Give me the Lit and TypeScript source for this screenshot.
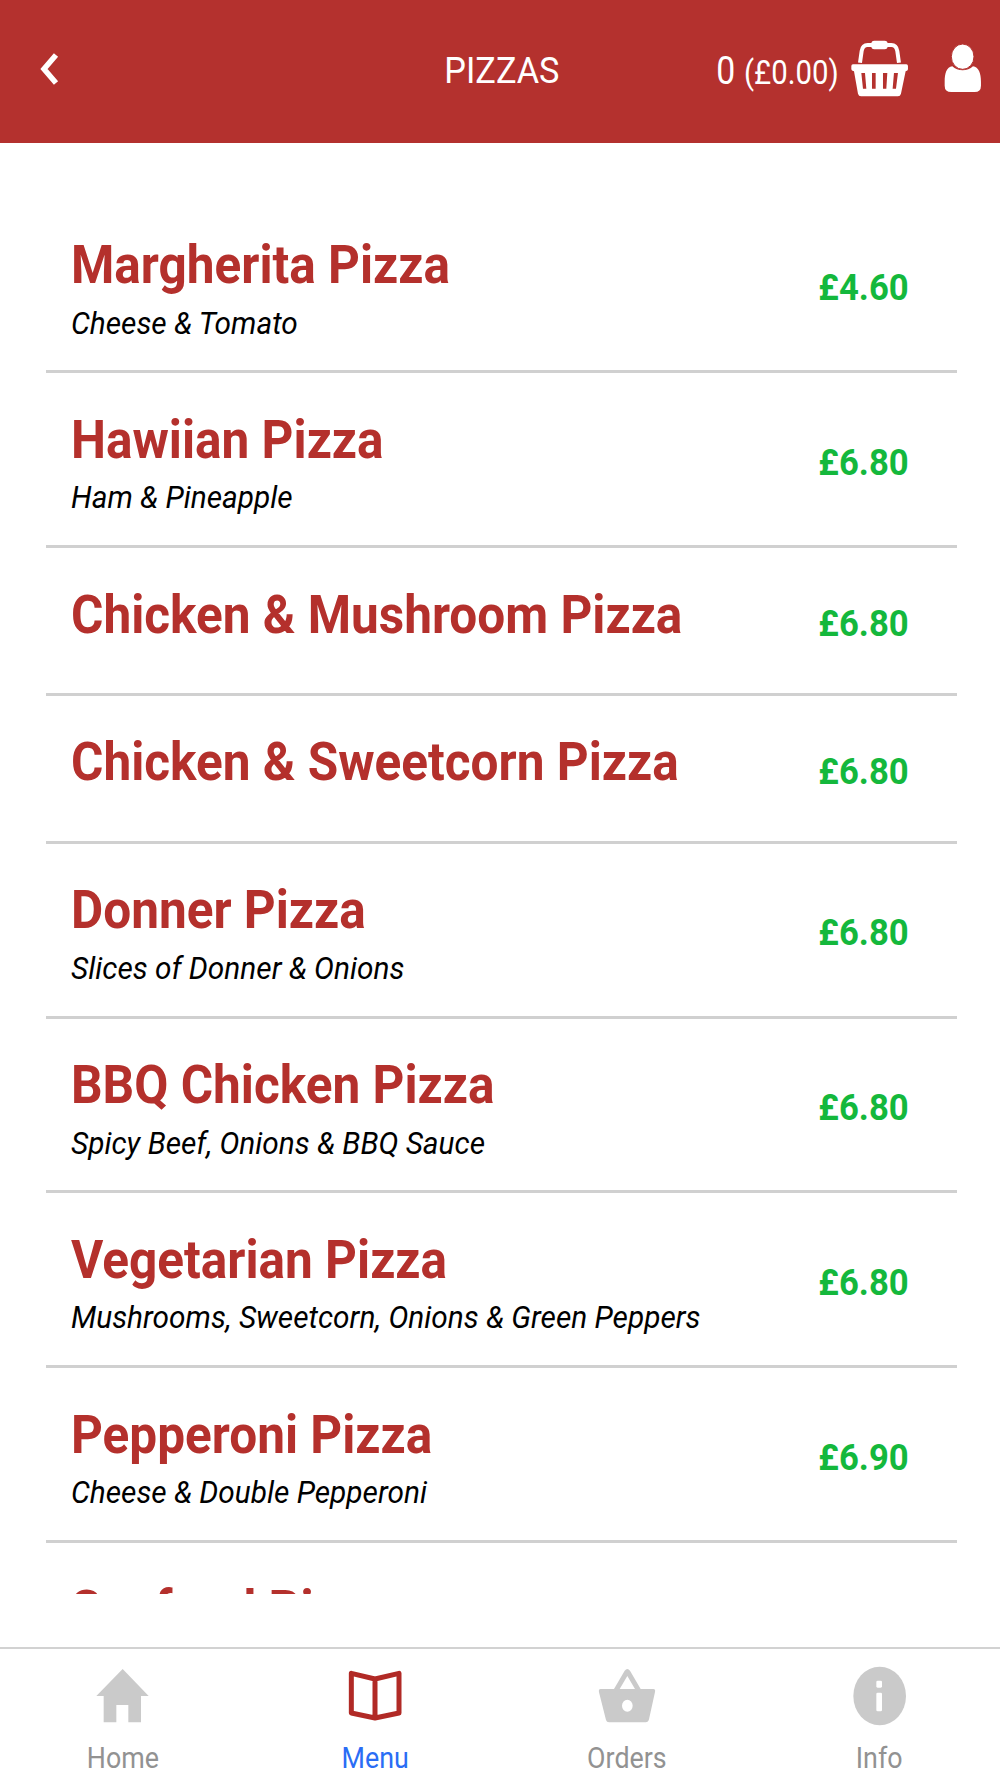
import { LitElement, html, css, svg, nothing } from "lit";
import { customElement, property } from "lit/decorators.js";

interface MenuItem {
  name: string;
  detail?: string;
  price: string;
}

const ITEMS: MenuItem[] = [
  { name: "Margherita Pizza", detail: "Cheese & Tomato", price: "£4.60" },
  { name: "Hawiian Pizza", detail: "Ham & Pineapple", price: "£6.80" },
  { name: "Chicken & Mushroom Pizza", price: "£6.80" },
  { name: "Chicken & Sweetcorn Pizza", price: "£6.80" },
  { name: "Donner Pizza", detail: "Slices of Donner & Onions", price: "£6.80" },
  { name: "BBQ Chicken Pizza", detail: "Spicy Beef, Onions & BBQ Sauce", price: "£6.80" },
  { name: "Vegetarian Pizza", detail: "Mushrooms, Sweetcorn, Onions & Green Peppers", price: "£6.80" },
  { name: "Pepperoni Pizza", detail: "Cheese & Double Pepperoni", price: "£6.90" },
  { name: "Seafood Pizza", price: "" },
];

const TABS = [
  {
    label: "Home",
    box: "96 75 180 186",
    icon: svg`<path fill="#cacaca" d="M188 87L266 168H243V247H205V195H169V247H131V168H109Z"/>`,
  },
  {
    label: "Menu",
    active: true,
    box: "852 75 180 186",
    icon: svg`<path fill="none" stroke="#b12a26" stroke-width="15" stroke-linejoin="round" d="M874 100L945 117L1017 100V219L945 234L874 219ZM945 117V234"/>`,
  },
  {
    label: "Orders",
    box: "108 75 180 186",
    icon: svg`<path fill="#cacaca" fill-rule="evenodd" d="M162 147L194 92Q202 82 210 92L242 147H280Q287 147 285 156L267 238Q265 247 257 247H147Q140 247 138 240L117 157Q115 147 122 147ZM179 147H225L202 108ZM202 179A16 18 0 1 0 202 215A16 18 0 1 0 202 179Z"/>`,
  },
  {
    label: "Info",
    box: "864 75 180 186",
    icon: svg`<ellipse cx="959" cy="168" rx="79" ry="88" fill="#cacaca"/><rect x="949" y="122" width="17" height="21" rx="4" fill="#fff"/><rect x="949" y="158" width="17" height="56" rx="4" fill="#fff"/>`,
  },
];

@customElement("menu-row")
class MenuRow extends LitElement {
  @property({ attribute: false }) item!: MenuItem;

  static styles = css`
    :host {
      display: block;
      flex: none;
    }
    .row {
      box-sizing: border-box;
      height: 147.7px;
      border-bottom: 3px solid #d0d0d0;
      padding: 0 48.5px 0 24.5px;
      display: flex;
      justify-content: space-between;
      align-items: center;
    }
    .row.tall {
      height: 174.9px;
    }
    .text {
      align-self: flex-start;
      padding-top: 34.5px;
      white-space: nowrap;
    }
    .name {
      font-size: 54.3px;
      line-height: 64px;
      font-weight: 700;
      color: #b4302c;
      transform: scaleX(0.912);
      transform-origin: left;
    }
    .detail {
      margin-top: 6.5px;
      font-size: 32px;
      line-height: 38px;
      font-style: italic;
      color: #000;
      transform: scaleX(0.932);
      transform-origin: left;
    }
    .price {
      font-size: 37.5px;
      line-height: 44px;
      padding-top: 4.5px;
      font-weight: 700;
      color: #14b83c;
      transform: scaleX(0.925);
      transform-origin: right;
    }
  `;

  render() {
    const { name, detail, price } = this.item;
    return html`<div class="row ${detail ? "tall" : ""}">
      <div class="text">
        <div class="name">${name}</div>
        ${detail ? html`<div class="detail">${detail}</div>` : nothing}
      </div>
      <div class="price">${price}</div>
    </div>`;
  }
}

@customElement("app-root")
class AppRoot extends LitElement {
  static styles = css`
    :host {
      display: flex;
      flex-direction: column;
      width: 1000px;
      height: 1778px;
      overflow: hidden;
      background: #fff;
      font-family: Roboto, "Liberation Sans", sans-serif;
    }
    svg {
      display: block;
      flex: none;
    }
    .bar {
      flex: none;
      box-sizing: border-box;
      height: 143px;
      background: #b4312e;
      color: #fff;
      display: grid;
      grid-template-columns: 1fr auto 1fr;
      align-items: center;
      padding: 0 0 6px 3px;
    }
    .back {
      margin-left: 36px;
    }
    .heading {
      font-size: 37.5px;
      line-height: 44px;
      padding-top: 3px;
      transform: scaleX(0.915);
    }
    .cart {
      display: flex;
      align-items: center;
      justify-content: flex-end;
      margin-right: 19px;
    }
    .summary {
      display: flex;
      align-items: baseline;
      gap: 10px;
      padding-top: 4px;
      margin-right: 12px;
      transform: scaleX(0.89);
      transform-origin: right;
    }
    .count {
      font-size: 38px;
      line-height: 44px;
    }
    .total {
      font-size: 33px;
    }
    .user {
      margin-left: 35.5px;
    }
    .list {
      flex: none;
      box-sizing: border-box;
      height: 1450.5px;
      padding: 55.5px 43px 0 46px;
      overflow: hidden;
      display: flex;
      flex-direction: column;
    }
    .tabs {
      margin-top: auto;
      flex: none;
      box-sizing: border-box;
      height: 131px;
      border-top: 2px solid #d2d2d2;
      display: flex;
      justify-content: center;
    }
    .tab {
      flex: none;
      width: 252px;
      display: flex;
      flex-direction: column;
      align-items: center;
      padding-top: 16px;
      color: #929292;
    }
    .tab.active {
      color: #2a6df5;
    }
    .label {
      margin-top: 14px;
      padding-left: 3px;
      font-size: 29px;
      line-height: 34px;
      transform: scaleX(0.925);
    }
  `;

  render() {
    return html`
      <header class="bar">
        <svg class="back" width="21" height="36" viewBox="0 0 21 36">
          <path d="M17 4L5 18L17 32" fill="none" stroke="#fff" stroke-width="5.5" />
        </svg>
        <div class="heading">PIZZAS</div>
        <div class="cart">
          <div class="summary"><span class="count">0</span><span class="total">(£0.00)</span></div>
          <svg width="57.3" height="57" viewBox="454 59 172 171">
            <path d="M481 127L486 92Q489 74 504 74H575Q590 74 593 92L598 127" fill="none" stroke="#fff" stroke-width="12" />
            <rect x="515" y="61" width="49" height="26" rx="9" fill="#fff" />
            <path
              fill="#fff"
              fill-rule="evenodd"
              d="M460 132H620Q625 132 625 137V147Q625 152 618 153L604 220Q602 228 595 228H484Q477 228 475 220L463 153Q455 152 455 147V137Q455 132 460 132ZM485 158L490 205H500L496 158ZM517 158V205H528V158ZM550 158V205H560L563 158ZM583 158L579 205H589L595 158Z"
            />
          </svg>
          <svg class="user" width="37.3" height="48.7" viewBox="732 71 112 146">
            <path
              fill="#fff"
              d="M757 138C773 154 803 154 819 138C836 140 843 159 843 184V196Q843 215 824 215H754Q734 215 734 196V184C734 159 740 140 757 138Z"
            />
            <ellipse cx="788" cy="109" rx="34" ry="38" fill="#fff" stroke="#b4312e" stroke-width="3" />
          </svg>
        </div>
      </header>
      <main class="list">${ITEMS.map((item) => html`<menu-row .item=${item}></menu-row>`)}</main>
      <nav class="tabs">
        ${TABS.map(
          (t) => html`<div class="tab ${t.active ? "active" : ""}">
            <svg width="60" height="62" viewBox=${t.box}>${t.icon}</svg>
            <div class="label">${t.label}</div>
          </div>`
        )}
      </nav>
    `;
  }
}
